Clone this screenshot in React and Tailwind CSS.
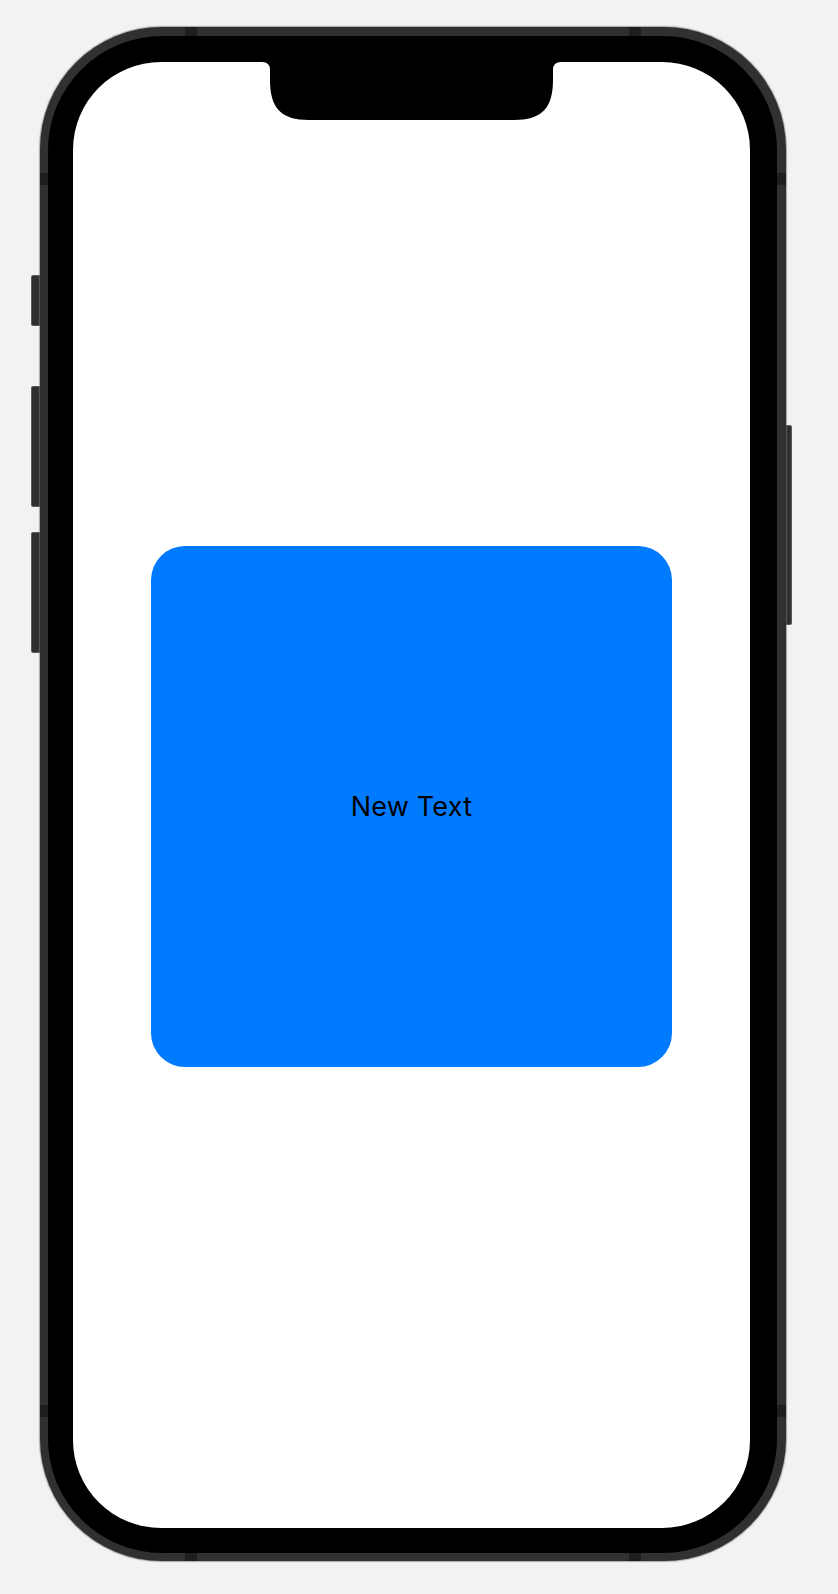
import React from "react";

function Notch() {
  return (
    <svg
      className="absolute left-[189px] top-0"
      width="299"
      height="58"
      viewBox="0 0 299 58"
    >
      <path
        d="M0 0 H299 Q291 0 291 8 V18 C291 46 280 58 252 58 H47 C19 58 8 46 8 18 V8 Q8 0 0 0 Z"
        fill="#000"
      />
    </svg>
  );
}

function Band({ className }) {
  return <div className={"absolute bg-[#1e1e1e] " + className} />;
}

function SideButton({ className }) {
  return <div className={"bg-[#2f2f2f] border border-[#7a7a7a]/60 " + className} />;
}

export default function App() {
  return (
    <div
      className="w-[838px] h-[1594px] bg-[#f2f2f2] overflow-hidden flex items-start pl-[31px] pt-[27px]"
      style={{ fontFamily: "Inter, 'Liberation Sans', sans-serif" }}
    >
      {/* left buttons */}
      <div className="w-[10px] -mr-[1px] flex flex-col pt-[248px]">
        <SideButton className="h-[51px] rounded-l-[2px]" />
        <SideButton className="mt-[60px] h-[121px] rounded-l-[2px]" />
        <SideButton className="mt-[25px] h-[121px] rounded-l-[2px]" />
      </div>

      {/* phone */}
      <div className="relative w-[746px] h-[1534px] shrink-0 rounded-[122px] bg-[#303030] pl-[8px] pr-[9px] pt-[9px] pb-[8px] shadow-[0_0_1px_1px_rgba(120,120,120,0.6)]">
        {/* antenna bands */}
        <Band className="left-[145px] top-0 w-[12px] h-[9px]" />
        <Band className="left-[589px] top-0 w-[12px] h-[9px]" />
        <Band className="left-[145px] bottom-0 w-[12px] h-[8px]" />
        <Band className="left-[589px] bottom-0 w-[12px] h-[8px]" />
        <Band className="left-0 top-[146px] w-[8px] h-[12px]" />
        <Band className="right-0 top-[146px] w-[9px] h-[12px]" />
        <Band className="left-0 bottom-[144px] w-[8px] h-[12px]" />
        <Band className="right-0 bottom-[144px] w-[9px] h-[12px]" />

        <div className="w-full h-full rounded-[114px] bg-black pl-[25px] pr-[27px] pt-[26px] pb-[25px]">
          <div className="relative w-full h-full rounded-[88px] bg-white overflow-hidden flex flex-col items-center">
            <Notch />
            <div className="mt-[484px] w-[521px] h-[521px] rounded-[34px] bg-[#007aff] flex items-center justify-center">
              <span className="text-[27px] leading-none text-black tracking-[0.2px]">New Text</span>
            </div>
          </div>
        </div>
      </div>

      {/* right button */}
      <div className="w-[7px] -ml-[1px] flex flex-col pt-[398px]">
        <SideButton className="h-[200px] rounded-r-[2px]" />
      </div>
    </div>
  );
}
